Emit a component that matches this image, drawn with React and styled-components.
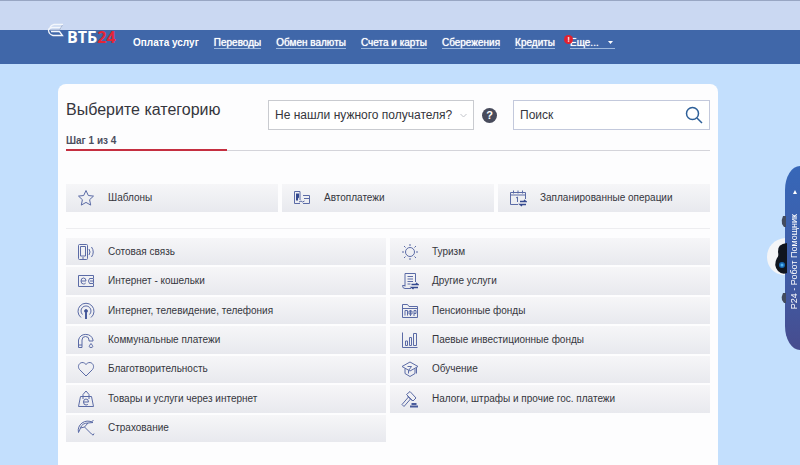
import React from "react";
import styled, { createGlobalStyle } from "styled-components";

const GlobalStyle = createGlobalStyle`
  * {
    box-sizing: border-box;
  }
  body {
    margin: 0;
    background-color: #c3dffd;
    font-family: "Liberation Sans", Arial, sans-serif;
    color: #35363d;
  }
  button, input, select {
    font-family: inherit;
    color: inherit;
  }
`;

const Page = styled.div`
  min-height: 100vh;
  display: flex;
  flex-direction: column;
`;

// Header Styling
const TopStrip = styled.div`
  height: 30px;
  background-color: #cad8f2;
  border-top: 1px solid #98a6c3;
`;

const Navbar = styled.header`
  height: 34px;
  margin-bottom: 20px;
  padding-left: 67px;
  background-color: #4067a9;
  display: flex;
  align-items: flex-start;
`;

const Logo = styled.a`
  position: relative;
  width: 66px;
  font-family: "Open Sans", sans-serif;
  font-size: 16px;
  font-weight: 700;
  line-height: 14px;
  color: #fff;
  text-decoration: none;
`;

const LogoMark = styled.svg`
  position: absolute;
  left: -20px;
  top: -7px;
`;

const LogoAccent = styled.span`
  color: #e32636;
`;

const Menu = styled.nav`
  display: flex;
  gap: 15px;
  padding-top: 7px;
`;

const MenuItem = styled.a`
  position: relative;
  font-size: 10px;
  font-weight: ${(props) => (props.$active ? 700 : 400)};
  line-height: 11px;
  white-space: nowrap;
  color: #fff;
  text-decoration: none;
  text-shadow: ${(props) => (props.$active ? "none" : "0 0 1px #fff")};
  border-bottom: 1px solid ${(props) => (props.$active ? "transparent" : "#9db8dd")};
`;

const Caret = styled.svg`
  margin: 0 2px 2px 9px;
`;

const Alert = styled.span`
  position: absolute;
  left: -6px;
  top: -2px;
  width: 9px;
  height: 9px;
  border-radius: 50%;
  background-color: #e3202e;
  font-size: 8px;
  line-height: 9px;
  text-align: center;
`;

// Card Styling
const Card = styled.main`
  flex: 1;
  margin: 0 82px 0 58px;
  padding: 16px 8px 23px;
  background-color: #fdfdfe;
  border-radius: 8px 8px 0 0;
`;

const CardHeader = styled.div`
  display: flex;
  align-items: flex-start;
`;

const Title = styled.h1`
  flex: 1;
  margin: 0;
  font-size: 16px;
  font-weight: 400;
  line-height: 20px;
  white-space: nowrap;
`;

const SelectBox = styled.div`
  position: relative;
  width: 206px;
`;

const Select = styled.select`
  appearance: none;
  display: block;
  width: 100%;
  height: 30px;
  padding: 0 6px;
  border: 1px solid #c9cbd0;
  border-radius: 0;
  background-color: #fff;
  font-size: 12px;
`;

const Chevron = styled.svg`
  position: absolute;
  right: 7px;
  top: 13px;
  pointer-events: none;
`;

const Help = styled.button`
  width: 15px;
  height: 15px;
  margin: 8px 16px 0 8px;
  padding: 0;
  border: none;
  border-radius: 50%;
  background-color: #484b5c;
  color: #fff;
  font-size: 11px;
  font-weight: 700;
  line-height: 15px;
`;

const SearchBox = styled.form`
  width: 197px;
  height: 30px;
  padding: 0 6px;
  border: 1px solid #c3c9dc;
  background-color: #fff;
  display: flex;
  align-items: center;
`;

const SearchInput = styled.input`
  flex: 1;
  min-width: 0;
  padding: 0;
  border: none;
  outline: none;
  background: none;
  font-size: 12px;

  &::placeholder {
    color: #35363d;
    opacity: 1;
  }
`;

const SearchButton = styled.button`
  width: 18px;
  height: 18px;
  padding: 0;
  border: none;
  background: none;
`;

const Step = styled.div`
  margin-top: 4px;
  font-size: 10px;
  font-weight: 700;
  line-height: 13px;
  color: #4c4e60;
`;

const Progress = styled.div`
  height: 2px;
  margin: 2px 0 33px;
  background: linear-gradient(#d4d4da, #d4d4da) 0 100% / 100% 1px no-repeat;
`;

const ProgressBar = styled.div`
  width: 25%;
  height: 2px;
  background-color: #c52f40;
`;

const Shortcuts = styled.div`
  display: grid;
  grid-template-columns: repeat(3, 1fr);
  grid-auto-rows: 28px;
  gap: 4px;
`;

const Divider = styled.hr`
  margin: 16px 0 9px;
  border: none;
  border-top: 1px solid #ededf0;
`;

const Categories = styled.div`
  display: grid;
  grid-auto-flow: column;
  grid-template-rows: repeat(7, 1fr);
  grid-auto-columns: 1fr;
  gap: 2px 4px;
  min-height: 204px;
`;

const Tile = styled.button`
  display: flex;
  align-items: center;
  gap: 13px;
  padding: 0 11px;
  border: none;
  background: linear-gradient(#f6f6f8, #e8e9ee);
  font-size: 10px;
  line-height: 12px;
  text-align: left;
  white-space: nowrap;
  cursor: pointer;
`;

// Assistant Styling
const Assistant = styled.aside`
  position: fixed;
  right: 0;
  top: 166px;
`;

const AssistantTab = styled.button`
  width: 15px;
  height: 184px;
  padding: 0 0 41px;
  border: none;
  border-radius: 15px 0 0 15px / 24px 0 0 24px;
  background: linear-gradient(#3767b8, #3f5ca6 60%, #474c8e);
  color: #fff;
  display: flex;
  flex-direction: column;
  align-items: flex-end;
  justify-content: flex-end;
  gap: 20px;
  font-size: 9px;
`;

const AssistantLabel = styled.span`
  writing-mode: vertical-rl;
  transform: rotate(180deg);
  line-height: 11px;
  white-space: nowrap;
`;

const Arrow = styled.svg`
  margin-right: 3px;
`;

const Robot = styled.svg`
  position: absolute;
  right: 13px;
  top: 46px;
  pointer-events: none;
`;

const icons = {
  star: <path d="M9 1.500l2.300 5 5.200.6-3.900 3.600 1.100 5.400L9 13.400l-4.700 2.700 1.100-5.400L1.500 7.100l5.200-.6z" />,
  auto: (
    <>
      <path d="M7 11V2.500H1.500v12H7M10 6.500h6.500v8H10M11 9.500h5.500M6 13l2-1 1.500 1 2-1" />
      <path d="M3 4.500h3v4l-1 1v2H3z" fill="#34498f" stroke="none" />
    </>
  ),
  calendar: (
    <>
      <path d="M9 15.500H1.500v-12h15V10M1.500 6h15M4.500 1.500v3M9 1.500v3M13.500 1.500v3M7 9l1.500-1v5" />
      <path d="M11 12.500h6l-2-1.500M17 15.500h-6l2 1.500" strokeWidth="1.300" stroke="#34498f" />
    </>
  ),
  phone: (
    <>
      <rect x="1.500" y="1.500" width="9" height="15" rx="1" />
      <path d="M3.500 3.500h5v9.500h-5zM5 15h2M12 6q2 3 0 6M14.500 4q3.500 5 0 10" />
    </>
  ),
  wallet: (
    <>
      <path d="M16.500 6V3.500h-15v11h15V12M16.500 6.500h-4q-2 2.500 0 5h4zM13 9h3.500" />
      <path d="M4 9h5q0-3-2.500-3T4 9q0 3 2.500 3Q8 12 8.700 11" />
    </>
  ),
  antenna: (
    <>
      <path d="M4 15.500a8 8 0 1 1 10 0M5.500 12.500a5 5 0 1 1 7 0" />
      <circle cx="9" cy="9" r="1.500" fill="#34498f" />
      <path d="M9 10v7" strokeWidth="2" stroke="#4a5c9c" />
    </>
  ),
  tap: (
    <>
      <path d="M1.500 16.500V9a7.500 7.500 0 0 1 14.500 0v1h-4V9a3.500 3.500 0 0 0-7 0v7.500zM1.500 14H5" />
      <path d="M14 12.500q-3.500 4 0 4t0-4z" />
    </>
  ),
  heart: <path d="M9 16L2.500 9.500C-1 5 5-.5 9 4.500c4-5 10 .5 6.500 5z" />,
  bag: (
    <>
      <path d="M3.500 6.500h11l2 10h-15zM6 9V4.500L9 1l3 3.500V9" />
      <path d="M6.500 12h5q0-3-2.500-3t-2.500 3q0 3 2.500 3 1.500 0 2-1" />
    </>
  ),
  umbrella: (
    <path d="M1.500 13.500C-.5 6 8-1 16 3.500l-5 .5-3.500 4-4 1zM3.500 9Q5 4 11 4M7.500 8l7 7q2 2.500 2.500-.5M14.500 2.500l2-1" />
  ),
  sun: (
    <>
      <circle cx="9" cy="9" r="4.500" />
      <path d="M9 1v2M9 15v2M1 9h2M15 9h2M3 3l1.500 1.500M13.500 13.500L15 15M3 15l1.500-1.500M13.500 4.500L15 3" />
    </>
  ),
  docs: (
    <>
      <path d="M4 13.500H1.500q0 3 2.500 3h6M4 14.500v-13h10.500V10M6.500 4.500H12M6.500 7H12M6.500 9.500H12M6.500 12h3" />
      <path d="M10.500 12.500H17L15 11M17 15.500h-6.500l2 1.500" strokeWidth="1.300" stroke="#34498f" />
    </>
  ),
  fund: (
    <>
      <path d="M1.500 15.500v-13h5l1.500 2h8.500v11zM1.500 6.500h15" />
      <path d="M4 13.500v-5h2.500v5M9.500 8v6M9.500 9H8v3h3V9zM13 14V8.500h2v3h-2" />
    </>
  ),
  chart: (
    <path d="M1.500 1.500v15h15M4.500 14.500V10h2v4.500zM8.500 14.500V6.500h2v8zM12.500 14.500v-12h3v12z" />
  ),
  hat: (
    <>
      <path d="M1 6.500L9 2l8 4.500-8 4.500zM4 8.500v5L9 16.500l5-3v-5M15.500 7.500v6" />
      <path d="M6.500 6.500h4l-3 4v3" />
    </>
  ),
  hammer: (
    <>
      <path d="M5.500 4.500l3.500-3 6 6.500-3 3zM7.500 7l2 2L3 16.500 1 14.500zM6.500 6l5 5" />
      <path d="M9 16.500h8M10.500 14h5" strokeWidth="2" stroke="#4a5c9c" />
    </>
  ),
};

const Icon = ({ name }) => (
  <svg width="18" height="18" viewBox="0 0 18 18" fill="none" stroke="#5b6ba6" aria-hidden="true">
    {icons[name]}
  </svg>
);

const menu = ["Переводы", "Обмен валюты", "Счета и карты", "Сбережения", "Кредиты"];

const shortcuts = [
  { icon: "star", label: "Шаблоны" },
  { icon: "auto", label: "Автоплатежи" },
  { icon: "calendar", label: "Запланированные операции" },
];

const categories = [
  { icon: "phone", label: "Сотовая связь" },
  { icon: "wallet", label: "Интернет - кошельки" },
  { icon: "antenna", label: "Интернет, телевидение, телефония" },
  { icon: "tap", label: "Коммунальные платежи" },
  { icon: "heart", label: "Благотворительность" },
  { icon: "bag", label: "Товары и услуги через интернет" },
  { icon: "umbrella", label: "Страхование" },
  { icon: "sun", label: "Туризм" },
  { icon: "docs", label: "Другие услуги" },
  { icon: "fund", label: "Пенсионные фонды" },
  { icon: "chart", label: "Паевые инвестиционные фонды" },
  { icon: "hat", label: "Обучение" },
  { icon: "hammer", label: "Налоги, штрафы и прочие гос. платежи" },
];

const App = () => {
  return (
    <Page>
      <GlobalStyle />
      <TopStrip />
      <Navbar>
        <Logo href="#">
          <LogoMark width="17" height="14" viewBox="0 0 17 14" fill="none" stroke="#f4f7fc" aria-hidden="true">
            <path d="M16 1.500H7Q4 2 3 4.500M14.500 4.500H5Q1.500 5 1.500 7.500 2 11.500 6 12.500h9.500l-3-4H4" strokeWidth="1.300" />
            <path d="M15.500 2l-3 5H3" stroke="#a9b7d3" />
          </LogoMark>
          ВТБ<LogoAccent>24</LogoAccent>
        </Logo>
        <Menu>
          <MenuItem href="#" $active>Оплата услуг</MenuItem>
          {menu.map((item) => (
            <MenuItem href="#" key={item}>{item}</MenuItem>
          ))}
          <MenuItem href="#">
            <Alert>!</Alert>
            Еще...
            <Caret width="5" height="3" viewBox="0 0 5 3" aria-hidden="true">
              <path d="M0 0h5L2.500 3z" fill="#fff" />
            </Caret>
          </MenuItem>
        </Menu>
      </Navbar>

      <Card>
        <CardHeader>
          <Title>Выберите категорию</Title>
          <SelectBox>
            <Select aria-label="Получатель">
              <option>Не нашли нужного получателя?</option>
            </Select>
            <Chevron width="7" height="5" viewBox="0 0 7 5" fill="none" stroke="#c2c4ca" aria-hidden="true">
              <path d="M.5 1l3 3 3-3" />
            </Chevron>
          </SelectBox>
          <Help type="button" aria-label="Помощь">?</Help>
          <SearchBox>
            <SearchInput type="text" placeholder="Поиск" aria-label="Поиск" />
            <SearchButton type="button" aria-label="Найти">
              <svg width="18" height="18" viewBox="0 0 18 18" fill="none" stroke="#2d5f98" strokeWidth="1.500">
                <circle cx="7.500" cy="7.500" r="6" />
                <path d="M12 12l5 5" />
              </svg>
            </SearchButton>
          </SearchBox>
        </CardHeader>
        <Step>Шаг 1 из 4</Step>
        <Progress>
          <ProgressBar />
        </Progress>

        <Shortcuts>
          {shortcuts.map((item) => (
            <Tile type="button" key={item.label}>
              <Icon name={item.icon} />
              {item.label}
            </Tile>
          ))}
        </Shortcuts>
        <Divider />
        <Categories>
          {categories.map((item) => (
            <Tile type="button" key={item.label}>
              <Icon name={item.icon} />
              {item.label}
            </Tile>
          ))}
        </Categories>
      </Card>

      <Assistant>
        <AssistantTab type="button">
          <Arrow width="4" height="4" viewBox="0 0 4 4" aria-hidden="true">
            <path d="M0 4h4L2 0z" fill="#fff" />
          </Arrow>
          <AssistantLabel>Р24 - Робот Помощник</AssistantLabel>
        </AssistantTab>
        <Robot width="22" height="96" viewBox="0 0 22 96" aria-hidden="true">
          <path d="M21 4h-3q-2 4-1 8l2 3h2zM21 81h-3q-2 4-1 7l2 3h2z" fill="#424b5e" />
          <path d="M20 26C9 27 2 35 2 45s7 17 16 18h2z" fill="#f4f5f7" />
          <path d="M22 31q-10 1-9 9 1 4-1 6-4 7 1 13 4 4 9 2z" fill="#10151f" />
          <circle cx="17" cy="53" r="3" fill="#1767b3" />
          <circle cx="17" cy="53" r="1.500" fill="#52b4ee" />
        </Robot>
      </Assistant>
    </Page>
  );
};

export default App;
